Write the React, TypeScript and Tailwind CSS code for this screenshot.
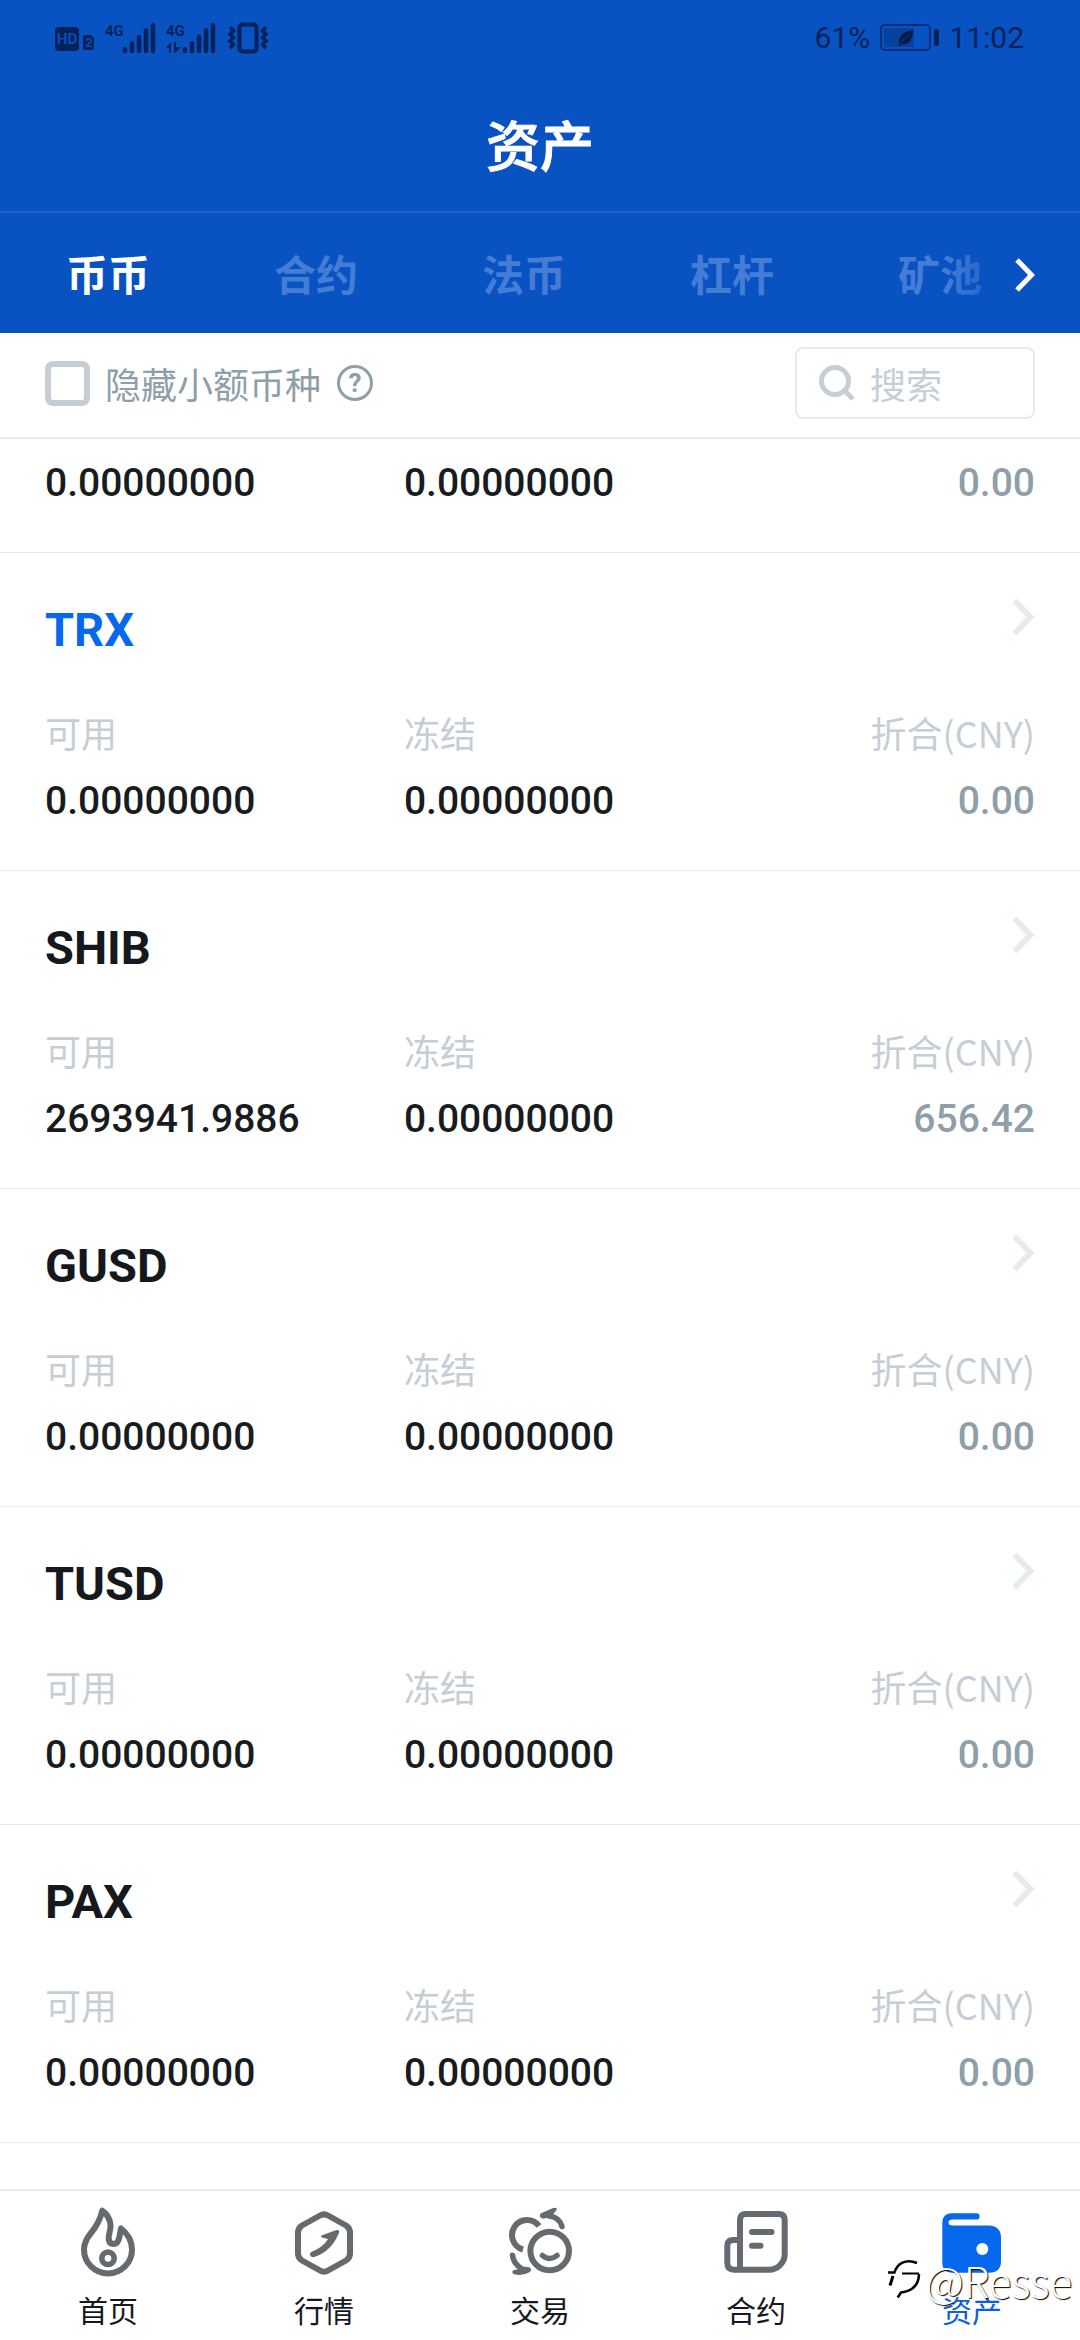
import React from 'react';

type Asset = { symbol: string; available: string; frozen: string; value: string; highlighted?: boolean };

const ASSETS: Asset[] = [
  { symbol: 'TRX', available: '0.00000000', frozen: '0.00000000', value: '0.00', highlighted: true },
  { symbol: 'SHIB', available: '2693941.9886', frozen: '0.00000000', value: '656.42' },
  { symbol: 'GUSD', available: '0.00000000', frozen: '0.00000000', value: '0.00' },
  { symbol: 'TUSD', available: '0.00000000', frozen: '0.00000000', value: '0.00' },
  { symbol: 'PAX', available: '0.00000000', frozen: '0.00000000', value: '0.00' },
];

const TABS = ['币币', '合约', '法币', '杠杆', '矿池'];

function HdIcon() {
  return (
    <svg width="24" height="32" viewBox="0 0 24 32" aria-hidden="true">
      <rect x="0" y="5" width="24" height="24" rx="4" fill="#04225a" />
      <text x="12" y="22" textAnchor="middle" fontFamily="Roboto, sans-serif" fontSize="15" fontWeight="500" fill="#0a52c2">HD</text>
    </svg>
  );
}

function SimIcon() {
  return (
    <svg width="12" height="32" viewBox="0 0 12 32" aria-hidden="true">
      <path d="M0 15Q0 13 2 13H8L11 16.500V26Q11 28 9 28H2Q0 28 0 26Z" fill="#04225a" />
      <text x="6" y="25" textAnchor="middle" fontFamily="Roboto, sans-serif" fontSize="12" fontWeight="500" fill="#0a52c2">2</text>
    </svg>
  );
}

function SignalIcon({ arrows = false }: { arrows?: boolean }) {
  const shift = arrows ? -1 : 0;
  return (
    <svg width="51" height="32" viewBox="0 0 51 32" aria-hidden="true" fill="#04225a">
      <text x="0" y="14" fontFamily="Roboto, sans-serif" fontSize="15" fontWeight="700">4G</text>
      <g stroke="#04225a" strokeWidth="4.400" strokeLinecap="round">
        <path d={`M${20 + shift} 27.300V29`} />
        <path d={`M${27 + shift} 21.200V29`} />
        <path d={`M${34 + shift} 15V29`} />
        <path d={`M${41 + shift} 8.500V29`} />
        <path d={`M${48 + shift} 3.200V29`} />
      </g>
      {arrows && (
        <>
          <path d="M0 26L5 20V31H3V26Z" />
          <path d="M8 20H10V25H15L9 31H8Z" />
        </>
      )}
    </svg>
  );
}

function VibrateIcon() {
  return (
    <svg width="42" height="32" viewBox="0 0 42 32" aria-hidden="true" fill="none" stroke="#04225a" strokeWidth="3.600">
      <rect x="12.500" y="2.500" width="17" height="27" rx="3" strokeWidth="4" />
      <path d="M3 5L6.500 8.500L3 12L6.500 15.500L3 19L6.500 22.500L3 26" />
      <path d="M39 5L35.500 8.500L39 12L35.500 15.500L39 19L35.500 22.500L39 26" />
    </svg>
  );
}

function BatteryIcon() {
  return (
    <svg width="59" height="28" viewBox="0 0 59 28" aria-hidden="true">
      <rect x="1" y="1" width="49" height="25" rx="4" fill="none" stroke="#052f7c" strokeWidth="2" />
      <rect x="4" y="4" width="30" height="19" fill="#07429f" />
      <path d="M19 22C18 12 22 8 33 6C33 16 29 21 21 20.500L19.500 22.500Z" fill="#031a45" />
      <path d="M20 20Q24 14 30 10" stroke="#07429f" strokeWidth="1" fill="none" />
      <rect x="54" y="5" width="5" height="17" rx="2" fill="#04225a" />
    </svg>
  );
}

function Chevron({ className }: { className: string }) {
  return (
    <svg width="23" height="38" viewBox="0 0 23 38" fill="none" stroke="currentColor" strokeWidth="6" className={className} aria-hidden="true">
      <path d="M2.500 2.500L18.500 19L2.500 35.500" />
    </svg>
  );
}

function HomeIcon() {
  return (
    <svg width="72" height="72" viewBox="0 0 72 72" fill="none" stroke="#656a6f" strokeWidth="6" strokeLinejoin="round" aria-hidden="true">
      <path d="M30.300 4.700C28 14 24 21 19 27C14 33 12 37 12 43.500A24 24 0 0 0 60 43.500C60 35 56 28 49 22.500C48 27 48 30 46.500 34C44.500 39.500 37 39.500 36.700 32.500C36.500 27 39 24 38.500 19C38 13 35 8 30.300 4.700Z" />
      <circle cx="36" cy="52.300" r="6.200" strokeWidth="5.600" />
    </svg>
  );
}

function MarketIcon() {
  return (
    <svg width="72" height="72" viewBox="0 0 72 72" fill="none" aria-hidden="true">
      <path stroke="#656a6f" strokeWidth="6" d="M32 9.500Q36 7.200 40 9.500L58 19.500Q62 22 62 26.500V47.500Q62 52 58 54.500L40 64.500Q36 67 32 64.500L14 54.500Q10 52 10 47.500V26.500Q10 22 14 19.500Z" />
      <path fill="#656a6f" d="M33.500 29.500L48.500 24Q51.800 23.500 51 27L47.500 34C42 43 34 49 26 51C22 52 20.500 47 24 45.500C31 43 36 39 40 33L34 31.500Q32 30.500 33.500 29.500Z" />
    </svg>
  );
}

function TradeIcon() {
  return (
    <svg width="72" height="72" viewBox="0 0 72 72" fill="none" stroke="#656a6f" strokeWidth="6" aria-hidden="true">
      <circle cx="45.700" cy="45" r="19.300" />
      <path d="M38.500 49.500Q45.700 55.500 53 49.500" strokeLinecap="round" strokeWidth="5.500" />
      <path d="M35 20A15 15 0 1 0 19 43.500" />
      <path d="M45 10C52 10.500 56.500 15 58 20.500" strokeLinecap="round" strokeWidth="5.500" />
      <path d="M36.500 7.500L49 2Q54 0.800 52.500 4L49 8.500L47 11L39 12.700Q34.500 12 36.500 7.500Z" fill="#656a6f" stroke="none" />
      <path d="M8.500 49.300C9 55 13 60 18 63" strokeLinecap="round" strokeWidth="5.500" />
      <path d="M10 64L17 62.500L18 60.500L25 61.200Q28.500 62.500 26 66Q18 70.500 10 68.200Q6.500 66 10 64Z" fill="#656a6f" stroke="none" />
    </svg>
  );
}

function ContractIcon() {
  return (
    <svg width="72" height="72" viewBox="0 0 72 72" fill="none" stroke="#656a6f" strokeWidth="6" aria-hidden="true">
      <path d="M20 63.700V14Q20 8 26 8H58.700Q64.700 8 64.700 14V48A15.700 15.700 0 0 1 49 63.700H14Q7.300 63.700 7.300 57V40Q7.300 34 13.300 34H20" />
      <path d="M32 26H51.500M32 39.700H40.500" strokeLinecap="round" />
    </svg>
  );
}

function WalletIcon() {
  return (
    <svg width="72" height="72" viewBox="0 0 72 72" fill="#0668ec" aria-hidden="true">
      <path d="M16 7.300H40.500a3.100 3.100 0 0 1 0 6.200H16.500Q12.500 13.500 12.500 16.500Q12.500 19.500 16.500 19.500H53Q65 20 65 32V55Q65 66.700 53 66.700H16Q6.300 66.700 6.300 57V17Q6.300 7.300 16 7.300Z" />
      <circle cx="46.300" cy="43" r="6" fill="#fff" />
    </svg>
  );
}

const NAV = [
  { label: '首页', Icon: HomeIcon },
  { label: '行情', Icon: MarketIcon },
  { label: '交易', Icon: TradeIcon },
  { label: '合约', Icon: ContractIcon },
  { label: '资产', Icon: WalletIcon, active: true },
];

function StatusBar() {
  return (
    <div className="flex h-[76px] items-center justify-between pr-14 pl-[55px] text-[#04225a]">
      <div className="flex items-center">
        <HdIcon />
        <span className="ml-1 flex items-center gap-2.5">
          <SimIcon />
          <SignalIcon />
          <SignalIcon arrows />
          <VibrateIcon />
        </span>
      </div>
      <div className="flex items-center gap-2.5 font-['Roboto',sans-serif] text-[30px] leading-9">
        <span>61%</span>
        <BatteryIcon />
        <span>11:02</span>
      </div>
    </div>
  );
}

const valueText = "font-['Roboto',sans-serif] text-[39px] leading-[56px] font-medium";
const columns = 'grid grid-cols-[29fr_31fr_20fr]';

function Values({ available, frozen, value }: { available: string; frozen: string; value: string }) {
  return (
    <div className={`${columns} ${valueText} text-[#181c20]`}>
      <span>{available}</span>
      <span>{frozen}</span>
      <span className="text-right text-[#8e9faa]">{value}</span>
    </div>
  );
}

function AssetRow({ asset }: { asset: Asset }) {
  return (
    <li className="border-b border-[#e7eaeb] px-[45px] pt-[45px] pb-[41px]">
      <div className="flex items-start justify-between">
        <h2
          className={
            asset.highlighted
              ? "font-['Roboto',sans-serif] text-[47px] leading-[64px] font-bold text-[#0668ec]"
              : "font-['Roboto',sans-serif] text-[47px] leading-[64px] font-bold text-[#15191e]"
          }
        >
          {asset.symbol}
        </h2>
        <button type="button" aria-label={asset.symbol}>
          <Chevron className="text-[#e6ebee]" />
        </button>
      </div>
      <div className={`${columns} mt-11 mb-[15px] text-[36px] leading-[52px] text-[#c5ced5]`}>
        <span>可用</span>
        <span>冻结</span>
        <span className="text-right whitespace-nowrap">折合(CNY)</span>
      </div>
      <Values available={asset.available} frozen={asset.frozen} value={asset.value} />
    </li>
  );
}

function Watermark() {
  return (
    <div className="pointer-events-none absolute right-2 bottom-8 flex items-center gap-1 text-white">
      <svg width="34" height="44" viewBox="0 0 34 44" fill="none" stroke="#000" aria-hidden="true">
        <path d="M0 14.500H6.500C9 6 18 0 29 5" strokeWidth="2.500" />
        <path d="M5 18L2 27.500" strokeWidth="3" />
        <path d="M14 15.500H31" strokeWidth="2" />
        <path d="M31 16C31 27 24 33 13 34.500L9.700 39.500" strokeWidth="2.500" />
      </svg>
      <span className="text-[42px] leading-[56px] font-light [text-shadow:1px_1px_1px_#000]">@Resse</span>
    </div>
  );
}

export default function App() {
  return (
    <div className="relative flex min-h-screen flex-col bg-white font-['Noto_Sans_CJK_SC',sans-serif]">
      <header className="bg-[#0852c2]">
        <StatusBar />
        <h1 className="border-b-2 border-[#1f62c9] py-8 text-center text-[54px] leading-[71px] font-medium text-white [-webkit-text-stroke:1px_white]">资产</h1>
        <nav className="relative flex h-[120px] items-center overflow-hidden pl-[66px]">
          <div className="flex gap-[124px]">
            {TABS.map((tab, i) => (
              <button
                key={tab}
                type="button"
                className={
                  i === 0
                    ? 'shrink-0 text-[42px] leading-[60px] font-bold text-white'
                    : 'shrink-0 text-[42px] leading-[60px] font-bold text-[#457dd6]'
                }
              >
                {tab}
              </button>
            ))}
          </div>
          <div className="absolute inset-y-0 right-0 flex w-[136px] items-center justify-end bg-linear-to-r from-transparent to-[#0852c2] to-60% pt-1 pr-[45px]">
            <button type="button" aria-label="更多">
              <svg width="20" height="34" viewBox="0 0 20 34" fill="none" stroke="#fff" strokeWidth="5" aria-hidden="true">
                <path d="M2 2L16.500 17L2 32" />
              </svg>
            </button>
          </div>
        </nav>
      </header>

      <section className="flex h-[106px] items-center justify-between border-b-2 border-[#e7eaeb] px-[45px] pb-1">
        <div className="flex items-center gap-4 text-[36px] leading-[52px] text-[#8e9faa]">
          <label className="flex items-center gap-[15px]">
            <input type="checkbox" className="size-[45px] appearance-none rounded-lg border-6 border-[#c5ced5] bg-white" />
            隐藏小额币种
          </label>
          <button
            type="button"
            aria-label="帮助"
            className="flex size-9 items-center justify-center rounded-full border-3 border-[#8e9faa] font-['Roboto',sans-serif] text-[26px] leading-none font-bold"
          >
            ?
          </button>
        </div>
        <label className="flex h-[72px] w-[240px] items-center gap-[15px] rounded-lg border-2 border-[#e7eaeb] pl-[22px] text-[#c5ced5]">
          <svg width="36" height="36" viewBox="0 0 36 36" fill="none" stroke="currentColor" strokeWidth="5" className="shrink-0" aria-hidden="true">
            <circle cx="16" cy="16" r="13.500" />
            <path d="M25.500 25.500L34 34" />
          </svg>
          <input
            type="text"
            aria-label="搜索"
            placeholder="搜索"
            className="w-full min-w-0 bg-transparent text-[36px] leading-[52px] outline-none placeholder:text-[#c5ced5]"
          />
        </label>
      </section>

      <ul className="flex-1">
        <li className="border-b border-[#e7eaeb] px-[45px] pt-4 pb-[41px]">
          <Values available="0.00000000" frozen="0.00000000" value="0.00" />
        </li>
        {ASSETS.map((asset) => (
          <AssetRow key={asset.symbol} asset={asset} />
        ))}
      </ul>

      <nav className="grid grid-cols-5 border-t-2 border-[#e7eaeb] pt-[15px] pb-[13px]">
        {NAV.map(({ label, Icon, active }) => (
          <a
            key={label}
            href="#"
            className={
              active
                ? 'flex flex-col items-center gap-[13px] text-[30px] leading-9 text-[#0d60d8]'
                : 'flex flex-col items-center gap-[13px] text-[30px] leading-9 text-[#15191e]'
            }
          >
            <Icon />
            {label}
          </a>
        ))}
      </nav>
      <Watermark />
    </div>
  );
}
